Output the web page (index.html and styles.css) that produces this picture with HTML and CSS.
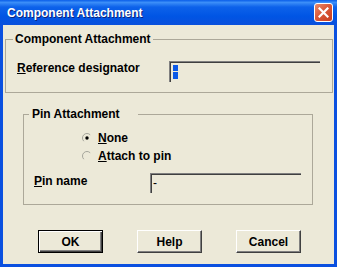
FILE: index.html
```html
<!DOCTYPE html>
<html lang="en">
<head>
    <meta charset="UTF-8">
    <title>Component Attachment</title>
    <link rel="stylesheet" href="styles.css">
</head>
<body>
    <div class="window">
        <div class="titlebar">
            <span class="title">Component Attachment</span>
            <span class="close">
                <svg width="11" height="11" viewBox="0 0 11 11">
                    <path d="M1.5 1.5 L9.5 9.5 M9.5 1.5 L1.5 9.5" stroke="#fff" stroke-width="2.2" stroke-linecap="square"/>
                </svg>
            </span>
        </div>

        <div class="client">
            <div class="group group-comp">
                <span class="group-label">Component Attachment</span>
                <div class="field-row ref-row">
                    <label class="field-label"><u>R</u>eference designator</label>
                    <div class="edit edit-ref"><span class="sel"></span></div>
                </div>
            </div>

            <div class="group group-pin">
                <span class="group-label pin-label">Pin Attachment</span>
                <div class="radios">
                    <div class="radio">
                        <svg width="12" height="12" viewBox="0 0 12 12">
                            <path d="M2.8 9.2 A4.5 4.5 0 0 1 9.2 2.8" fill="none" stroke="#a6a69c" stroke-width="1"/>
                            <circle cx="6" cy="6" r="1.7" fill="#000"/>
                        </svg>
                        <span><u>N</u>one</span>
                    </div>
                    <div class="radio">
                        <svg width="12" height="12" viewBox="0 0 12 12">
                            <path d="M2.8 9.2 A4.5 4.5 0 0 1 9.2 2.8" fill="none" stroke="#a6a69c" stroke-width="1"/>
                        </svg>
                        <span><u>A</u>ttach to pin</span>
                    </div>
                </div>
                <div class="field-row pin-row">
                    <label class="field-label"><u>P</u>in name</label>
                    <div class="edit edit-pin">-</div>
                </div>
            </div>

            <div class="buttons">
                <button class="btn btn-default">OK</button>
                <button class="btn">Help</button>
                <button class="btn">Cancel</button>
            </div>
        </div>
    </div>
</body>
</html>
```

FILE: styles.css
```css
* {
    box-sizing: border-box;
}

body {
    margin: 0;
    background: #ece9d8;
    font-family: 'Liberation Sans', Arial, sans-serif;
    font-size: 12px;
    font-weight: bold;
    color: #000;
}

.window {
    width: 337px;
    height: 267px;
}

.titlebar {
    height: 25px;
    display: flex;
    justify-content: space-between;
    align-items: flex-start;
    padding: 0 4px 0 7px;
    background: linear-gradient(#0a5ee9 0%, #3b8ef8 10%, #0d62ea 28%, #0055e4 65%, #0a50dc 100%);
}

.title {
    margin-top: 6px;
    color: #fff;
    font-size: 12px;
    line-height: 14px;
    text-shadow: 1px 1px #0c237a;
}

.close {
    margin-top: 3px;
    width: 19px;
    height: 19px;
    display: flex;
    align-items: center;
    justify-content: center;
    border: 1px solid #fff;
    border-radius: 3px;
    background: linear-gradient(135deg, #e98a6c 0%, #d95a3a 45%, #c83d1f 100%);
}

.client {
    height: 242px;
    border: 3px solid #0a50e0;
    border-top: none;
    background: #ece9d8;
    padding-top: 14px;
}

.group {
    position: relative;
    border: 1px solid #aca899;
}

/* caption sits over the top edge of the frame */
.group-label {
    position: absolute;
    top: -8px;
    left: 7px;
    padding: 0 2px;
    background: #ece9d8;
    line-height: 14px;
    white-space: nowrap;
}

.pin-label {
    left: 5px;
    width: 109px;
    padding-left: 3px;
}

.group-comp {
    margin-left: 2px;
    width: 328px;
    padding: 21px 12px 10px 11px;
}

.group-pin {
    margin: 21px 0 0 20px;
    width: 290px;
    padding: 14px 0 11px 0;
}

.field-row {
    display: grid;
    align-items: start;
}

.ref-row {
    grid-template-columns: 152px 151px;
}

.pin-row {
    margin-top: 8px;
    padding-left: 10px;
    grid-template-columns: 116px 151px;
}

.field-label {
    line-height: 14px;
    white-space: nowrap;
}

.pin-row .field-label {
    margin-top: 1px;
}

.edit {
    border-style: solid;
    border-width: 1px 0 0 1px;
    border-color: #808080;
    box-shadow: inset 1px 1px #404040;
}

.edit-ref {
    height: 21px;
    padding: 2px 0 0 2px;
}

.edit-pin {
    height: 20px;
    padding-left: 2px;
    line-height: 18px;
    font-weight: normal;
}

.sel {
    display: block;
    width: 5px;
    height: 14px;
    margin: 1px 0 0 1px;
    background: linear-gradient(#0a58e6 0, #0a58e6 6px, #ece9d8 6px, #ece9d8 7px, #0a58e6 7px);
}

.radios {
    padding-left: 57px;
}

.radio {
    height: 18px;
    display: flex;
    align-items: center;
    gap: 5px;
    line-height: 14px;
}

.buttons {
    display: flex;
    gap: 34px;
    margin-top: 25px;
    padding-left: 35px;
}

.btn {
    width: 65px;
    height: 23px;
    padding: 0;
    font: inherit;
    color: #000;
    background: #ece9d8;
    border: 1px solid;
    border-color: #fff #404040 #404040 #fff;
    box-shadow: inset -1px -1px #808080;
}

.btn-default {
    border-color: #000;
    box-shadow: inset 1px 1px #fff, inset -1px -1px #404040, inset -2px -2px #808080;
}
```
